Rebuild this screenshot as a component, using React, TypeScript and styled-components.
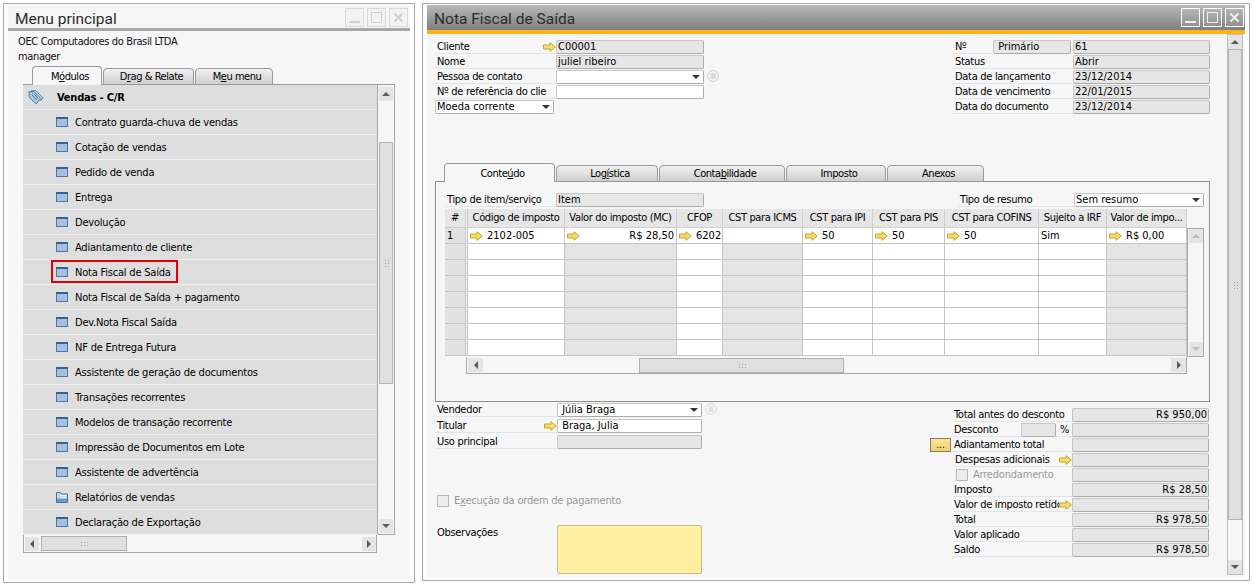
import React from 'react';
import styled, { createGlobalStyle } from 'styled-components';

const GlobalStyle = createGlobalStyle`
  html, body { margin: 0; padding: 0; background: #fff; overflow: hidden; }
  body { font-family: "DejaVu Sans", Tahoma, sans-serif; font-stretch: condensed; font-size: 11px; color: #000; }
  u { text-decoration-thickness: 1px; text-underline-offset: 1px; }
`;

const Arrow = () => (
  <ArrowSvg viewBox="0 0 13 10">
    <path d="M0.5 3h6.5V0.7L12.3 5 7 9.3V7H0.5z" fill="#f6dc68" stroke="#c4a72e" strokeWidth="1" />
  </ArrowSvg>
);

const ArrowSvg = styled.svg`
  width: 13px;
  height: 10px;
  flex: none;
`;

const FormIcon = () => (
  <svg width="12" height="10" viewBox="0 0 12 10" style={{ flex: 'none' }}>
    <rect x="0.5" y="0.5" width="11" height="9" fill="#a6c1de" stroke="#4f77a3" />
    <rect x="0" y="0" width="12" height="2" fill="#2f6496" />
  </svg>
);

const FolderIcon = () => (
  <svg width="12" height="11" viewBox="0 0 12 11" style={{ flex: 'none' }}>
    <path d="M0.5 0.500h4l1 1.500h6v8.500h-11z" fill="#c5d8ea" stroke="#3f75a6" />
    <path d="M4.500 3.500h6M4.500 5.500h6" stroke="#f2f6fa" />
    <rect x="1" y="6.500" width="10" height="3.500" fill="#6c9cc8" />
  </svg>
);

const TagsIcon = () => (
  <svg width="16" height="15" viewBox="0 0 16 15" style={{ flex: 'none' }}>
    <path d="M1 1.500h5l7 7-5 5.500-7-7z" fill="#a9c6df" stroke="#4d81ad" />
    <path d="M3 0.800h5l7 7-2.500 3" fill="none" stroke="#4d81ad" />
    <path d="M4 5l5 5M6 4l4 4" stroke="#4d81ad" />
    <circle cx="3.500" cy="3.500" r="1" fill="#fff" stroke="#4d81ad" strokeWidth="0.6" />
  </svg>
);

const ListRoundIcon = ({ faded }: { faded?: boolean }) => (
  <svg width="12" height="12" viewBox="0 0 12 12" style={{ flex: 'none', marginLeft: 3, opacity: faded ? 0.6 : 1 }}>
    <circle cx="6" cy="6" r="5.400" fill="#f7f7f7" stroke="#c2c8cd" strokeWidth="0.9" />
    <path d="M3.500 4h5M3.500 6h5M3.500 8h5" stroke="#a3abb1" strokeWidth="0.8" />
  </svg>
);

const Page = styled.div`
  display: flex;
  align-items: flex-start;
  gap: 7px;
  width: 1255px;
  height: 584px;
  padding: 3px 5px 0 3px;
  box-sizing: border-box;
`;

const Window = styled.div<{ $w: number; $h: number }>`
  width: ${p => p.$w}px;
  height: ${p => p.$h}px;
  box-sizing: border-box;
  border: 1px solid #a9a9a9;
  padding: 1px 4px 3px;
  background: #fff;
  display: flex;
  flex-direction: column;
`;

const MenuTitleBar = styled.div`
  height: 26px;
  display: flex;
  align-items: center;
  justify-content: space-between;
  padding: 2px 2px 0 7px;
  box-sizing: border-box;
  flex: none;
  background: #f6f6f6;
  border-bottom: 3px solid #a8a8a8;
`;

const TitleText = styled.div`
  font-family: Roboto, sans-serif;
  font-stretch: normal;
  font-size: 15.5px;
  color: #2c2c2c;
  padding-top: 2px;
`;

const WinButtons = styled.div`
  display: flex;
  gap: 3px;
`;

const WinButton = styled.div<{ $faded?: boolean }>`
  width: 19px;
  height: 19px;
  box-sizing: border-box;
  border: 1px solid ${p => (p.$faded ? '#d8d8d8' : '#fff')};
  background: ${p => (p.$faded ? '#f2f2f2' : 'rgba(255,255,255,0.08)')};
  display: flex;
  align-items: center;
  justify-content: center;
  svg { display: block; }
`;

const WinControls = ({ faded }: { faded?: boolean }) => {
  const c = faded ? '#cfcfcf' : '#f0f0f0';
  return (
    <WinButtons>
      <WinButton $faded={faded}>
        <svg width="13" height="13"><rect x="1" y="10" width="11" height="2" fill={c} /></svg>
      </WinButton>
      <WinButton $faded={faded}>
        <svg width="13" height="13"><rect x="1.500" y="1.500" width="10" height="10" fill="none" stroke={c} /></svg>
      </WinButton>
      <WinButton $faded={faded}>
        <svg width="13" height="13"><path d="M2.500 2.500l8 8M10.500 2.500l-8 8" stroke={c} strokeWidth="2" /></svg>
      </WinButton>
    </WinButtons>
  );
};

const MenuBody = styled.div`
  flex: 1;
  background: #f6f6f6;
  padding: 3px 15px 0 15px;
  display: flex;
  flex-direction: column;
  min-height: 0;
`;

const Company = styled.div`
  margin-left: -5px;
  height: 15px;
  line-height: 15px;
  color: #111;
  letter-spacing: -0.35px;
`;

const TabStrip = styled.div<{ $left: number; $top?: number }>`
  display: flex;
  gap: 1px;
  padding-left: ${p => p.$left}px;
  margin-top: ${p => p.$top ?? 0}px;
  position: relative;
  z-index: 1;
  flex: none;
`;

const Tab = styled.div<{ $w: number; $active?: boolean }>`
  width: ${p => p.$w}px;
  height: ${p => (p.$active ? 19 : 17)}px;
  margin-top: ${p => (p.$active ? 0 : 2)}px;
  margin-bottom: -1px;
  padding-left: 6px;
  box-sizing: border-box;
  border: 1px solid #9a9a9a;
  border-bottom: ${p => (p.$active ? '0' : '1px solid #9a9a9a')};
  border-radius: 4px 4px 0 0;
  background: ${p => (p.$active ? '#f6f6f6' : 'linear-gradient(#f0f0f0, #cfcfcf)')};
  text-align: center;
  line-height: ${p => (p.$active ? 20 : 16)}px;
  letter-spacing: -0.45px;
`;

const MenuPanel = styled.div`
  display: grid;
  grid-template-columns: 354px 18px;
  grid-template-rows: 450px 18px;
  border-top: 1px solid #9a9a9a;
  flex: none;
`;

const MenuList = styled.div`
  display: flex;
  flex-direction: column;
  background: #dedede;
  overflow: hidden;
`;

const MenuRow = styled.div<{ $head?: boolean }>`
  flex: none;
  height: 25px;
  box-sizing: border-box;
  border-bottom: 1px solid #f0f0f0;
  display: flex;
  align-items: center;
  padding-left: ${p => (p.$head ? 5 : 33)}px;
  gap: ${p => (p.$head ? 13 : 7)}px;
  font-weight: ${p => (p.$head ? 700 : 400)};
  position: relative;
  letter-spacing: -0.2px;
`;

const MenuLabel = styled.span`
  white-space: nowrap;
`;

const Highlight = styled.div`
  position: absolute;
  left: 28px;
  top: 0;
  width: 127px;
  height: 23px;
  box-sizing: border-box;
  border: 2px solid #e60000;
`;

const VScrollBox = styled.div`
  box-sizing: border-box;
  border-right: 1px solid #a8a8a8;
  border-bottom: 1px solid #a8a8a8;
  border-left: 1px solid #a8a8a8;
  background: #f6f6f6;
  display: flex;
  flex-direction: column;
  align-items: center;
  padding: 2px 1px 1px;
`;

const ScrollButton = styled.div<{ $w?: number }>`
  width: ${p => p.$w ?? 14}px;
  height: 14px;
  background: #e4e4e4;
  display: flex;
  align-items: center;
  justify-content: center;
  flex: none;
`;

const Tri = styled.div<{ $dir: 'up' | 'down' | 'left' | 'right'; $dim?: boolean }>`
  width: 0;
  height: 0;
  border-style: solid;
  ${p => {
    const c = p.$dim ? '#bdbdbd' : '#5c5c5c';
    if (p.$dir === 'up') return `border-width: 0 4px 4px; border-color: transparent transparent ${c};`;
    if (p.$dir === 'down') return `border-width: 4px 4px 0; border-color: ${c} transparent transparent;`;
    if (p.$dir === 'left') return `border-width: 4px 4px 4px 0; border-color: transparent ${c} transparent transparent;`;
    return `border-width: 4px 0 4px 4px; border-color: transparent transparent transparent ${c};`;
  }}
`;

const VThumb = styled.div<{ $top: number; $h: number }>`
  width: 14px;
  height: ${p => p.$h}px;
  margin-top: ${p => p.$top}px;
  box-sizing: border-box;
  border: 1px solid #b4b4b4;
  background: #e0e0e0;
  flex: none;
  display: flex;
  align-items: center;
  justify-content: center;
`;

const Spacer = styled.div`
  flex: 1;
`;

const Grip = styled.div<{ $vertical?: boolean }>`
  width: ${p => (p.$vertical ? 5 : 8)}px;
  height: ${p => (p.$vertical ? 8 : 5)}px;
  background-image: radial-gradient(#a5a5a5 0.7px, transparent 0.8px);
  background-size: 3px 3px;
`;

const HScrollBox = styled.div`
  box-sizing: border-box;
  border-bottom: 1px solid #a8a8a8;
  border-left: 1px solid #a8a8a8;
  border-right: 1px solid #a8a8a8;
  background: #f6f6f6;
  display: flex;
  align-items: center;
  padding: 1px 0 1px 1px;
`;

const HThumb = styled.div<{ $left: number; $w: number }>`
  width: ${p => p.$w}px;
  height: 15px;
  margin-left: ${p => p.$left}px;
  box-sizing: border-box;
  border: 1px solid #b0b0b0;
  background: #e0e0e0;
  flex: none;
  display: flex;
  align-items: center;
  justify-content: center;
`;

const DocTitleBar = styled.div`
  height: 29px;
  flex: none;
  box-sizing: border-box;
  background: linear-gradient(#b9b9b9, #7f7f7f);
  border-bottom: 4px solid #fdb515;
  display: flex;
  align-items: center;
  justify-content: space-between;
  padding: 0 1px 0 7px;
`;

const DocBody = styled.div`
  flex: 1;
  min-height: 0;
  background: #f6f6f6;
  display: flex;
  padding: 0 2px 2px 8px;
  justify-content: space-between;
`;

const DocContent = styled.div`
  width: 775px;
  display: flex;
  flex-direction: column;
`;

const DocHead = styled.div`
  display: flex;
  justify-content: space-between;
  padding-top: 6px;
  height: 129px;
  box-sizing: border-box;
  flex: none;
`;

const FormCol = styled.div<{ $w: number }>`
  width: ${p => p.$w}px;
  display: flex;
  flex-direction: column;
`;

const FormRow = styled.div<{ $pitch?: number }>`
  display: flex;
  align-items: flex-start;
  height: ${p => p.$pitch ?? 15}px;
  flex: none;
`;

const FieldLabel = styled.div<{ $w: number; $noLine?: boolean; $pad?: number }>`
  width: ${p => p.$w}px;
  height: 14px;
  line-height: 13px;
  box-sizing: border-box;
  padding-left: ${p => p.$pad ?? 2}px;
  border-bottom: ${p => (p.$noLine ? '0' : '1px solid #dfe5e8')};
  flex: none;
  display: flex;
  align-items: center;
  justify-content: space-between;
  white-space: nowrap;
  overflow: hidden;
  letter-spacing: -0.3px;
`;

const LabelClip = styled.span`
  flex: 1;
  min-width: 0;
  overflow: hidden;
`;

const Field = styled.div<{ $w: number; $tone?: 'off' | 'on'; $right?: boolean }>`
  width: ${p => p.$w}px;
  height: 14px;
  box-sizing: border-box;
  flex: none;
  background: ${p => (p.$tone === 'on' ? '#fff' : '#e6e6e6')};
  border: 1px solid #c6c6c6;
  border-right-color: #acacac;
  border-bottom-color: #acacac;
  border-radius: 2px;
  line-height: 12px;
  padding: 0 1px;
  display: flex;
  align-items: center;
  justify-content: ${p => (p.$right ? 'flex-end' : 'space-between')};
  white-space: nowrap;
  overflow: hidden;
`;

const FieldGap = styled.div`
  width: 2px;
  flex: none;
`;

const Caret = styled.div`
  width: 0;
  height: 0;
  border-style: solid;
  border-width: 4px 4px 0;
  border-color: #333 transparent transparent;
  margin-right: 2px;
  flex: none;
`;

const DocTabPanel = styled.div`
  height: 221px;
  box-sizing: border-box;
  border: 1px solid #8f8f8f;
  padding: 11px 5px 0 9px;
  flex: none;
  display: flex;
  flex-direction: column;
`;

const PanelRow = styled.div`
  display: flex;
  justify-content: space-between;
  height: 16px;
  flex: none;
`;

const GridWrap = styled.div`
  display: grid;
  grid-template-columns: 742px 17px;
  grid-template-rows: 148px 17px;
  flex: none;
`;

const TaxTable = styled.div`
  display: grid;
  grid-template-columns: 21px 2px 97px 112px 46px 80px 70px 72px 94px 68px 80px;
  grid-template-rows: 19px repeat(8, 16px);
  width: 742px;
`;

const HeadCell = styled.div`
  background: #e6e6e6;
  border-right: 1px solid #cfcfcf;
  border-bottom: 1px solid #cfcfcf;
  box-sizing: border-box;
  padding: 0 1px;
  height: 19px;
  line-height: 17px;
  text-align: center;
  white-space: nowrap;
  overflow: hidden;
  letter-spacing: -0.35px;
`;

const BodyCell = styled.div<{ $off?: boolean; $side?: boolean }>`
  background: ${p => (p.$side ? '#e2e2e2' : p.$off ? '#e4e4e4' : '#fff')};
  border-right: 1px solid #c6c6c6;
  border-bottom: 1px solid #c6c6c6;
  box-sizing: border-box;
  display: flex;
  align-items: center;
  gap: 4px;
  padding: 0 2px;
  white-space: nowrap;
  overflow: hidden;
  justify-content: flex-start;
`;

const Grow = styled.span`
  flex: 1;
  text-align: right;
`;

const GapCell = styled.div`
  background: #f0f0f0;
  border-right: 1px solid #c6c6c6;
  border-bottom: 1px solid #e0e0e0;
`;

const GridVScroll = styled(VScrollBox)`
  margin-top: 19px;
  border-top: 1px solid #a8a8a8;
  padding-top: 0;
  padding-bottom: 0;
`;

const GridHScroll = styled(HScrollBox)`
  margin-left: 21px;
`;

const DocBottom = styled.div`
  display: flex;
  justify-content: space-between;
  flex: 1;
`;

const BottomLeft = styled.div`
  width: 290px;
  padding-top: 1px;
  display: flex;
  flex-direction: column;
`;

const BottomRight = styled.div`
  padding-top: 6px;
  display: flex;
  flex-direction: column;
  margin-right: 1px;
`;

const CheckLine = styled.div<{ $top?: number; $left: number; $w?: number }>`
  display: flex;
  align-items: center;
  gap: 5px;
  margin-top: ${p => p.$top ?? 0}px;
  margin-left: ${p => p.$left}px;
  width: ${p => (p.$w ? `${p.$w}px` : 'auto')};
  height: 13px;
  color: #999;
  flex: none;
  white-space: nowrap;
  letter-spacing: -0.2px;
`;

const CheckBox = styled.div`
  width: 12px;
  height: 12px;
  box-sizing: border-box;
  border: 1px solid #b8b8b8;
  background: #ececec;
  flex: none;
`;

const NotesRow = styled.div`
  display: flex;
  margin-top: 18px;
  flex: none;
`;

const NotesBox = styled.div`
  width: 145px;
  height: 49px;
  box-sizing: border-box;
  background: #ffef9f;
  border: 1px solid #c4bd93;
  border-radius: 2px;
`;

const TotalsRow = styled.div`
  display: flex;
  align-items: flex-start;
  height: 15px;
  flex: none;
`;

const SlotButton = styled.div`
  width: 21px;
  height: 14px;
  box-sizing: border-box;
  margin-right: 2px;
  background: linear-gradient(#fbe59a, #f3cf6a);
  border: 1px solid #8c7d4c;
  line-height: 12px;
  text-align: center;
  font-size: 10px;
  flex: none;
`;

const Slot = styled.div`
  width: 23px;
  flex: none;
`;

const PageScroll = styled(VScrollBox)`
  width: 16px;
  border: 1px solid #bcbcbc;
  padding: 0;
  background: #f6f6f6;
  align-items: stretch;
  flex: none;
`;

const PageScrollThumb = styled(VThumb)`
  width: auto;
`;

const PageScrollButton = styled(ScrollButton)`
  width: auto;
`;

const menuItems = [
  'Contrato guarda-chuva de vendas', 'Cotação de vendas', 'Pedido de venda', 'Entrega', 'Devolução',
  'Adiantamento de cliente', 'Nota Fiscal de Saída', 'Nota Fiscal de Saída + pagamento', 'Dev.Nota Fiscal Saída',
  'NF de Entrega Futura', 'Assistente de geração de documentos', 'Transações recorrentes',
  'Modelos de transação recorrente', 'Impressão de Documentos em Lote', 'Assistente de advertência',
  'Relatórios de vendas', 'Declaração de Exportação',
];

const headers = ['#', '', 'Código de imposto', 'Valor do imposto (MC)', 'CFOP', 'CST para ICMS', 'CST para IPI', 'CST para PIS', 'CST para COFINS', 'Sujeito a IRF', 'Valor de impo...'];
const offCols = [3, 5, 10];

const firstRow: { t: string; arrow?: boolean; right?: boolean }[] = [
  { t: '2102-005', arrow: true },
  { t: 'R$ 28,50', arrow: true, right: true },
  { t: '6202', arrow: true },
  { t: '' },
  { t: '50', arrow: true },
  { t: '50', arrow: true },
  { t: '50', arrow: true },
  { t: 'Sim' },
  { t: 'R$ 0,00', arrow: true },
];

const totals: { label: string; value?: string }[] = [
  { label: 'Imposto', value: 'R$ 28,50' },
  { label: 'Valor de imposto retidc' },
  { label: 'Total', value: 'R$ 978,50' },
  { label: 'Valor aplicado' },
  { label: 'Saldo', value: 'R$ 978,50' },
];

const App = () => {
  return (
    <Page>
      <GlobalStyle />
      <Window $w={412} $h={580}>
        <MenuTitleBar>
          <TitleText>Menu principal</TitleText>
          <WinControls faded />
        </MenuTitleBar>
        <MenuBody>
          <Company>OEC Computadores do Brasil LTDA</Company>
          <Company>manager</Company>
          <TabStrip $left={9} $top={2}>
            <Tab $w={70} $active>M<u>ó</u>dulos</Tab>
            <Tab $w={91}>D<u>r</u>ag &amp; Relate</Tab>
            <Tab $w={78}>M<u>e</u>u menu</Tab>
          </TabStrip>
          <MenuPanel>
            <MenuList>
              <MenuRow $head>
                <TagsIcon />
                <MenuLabel>Vendas - C/R</MenuLabel>
              </MenuRow>
              {menuItems.map(item => (
                <MenuRow key={item}>
                  {item === 'Relatórios de vendas' ? <FolderIcon /> : <FormIcon />}
                  <MenuLabel>{item}</MenuLabel>
                  {item === 'Nota Fiscal de Saída' && <Highlight />}
                </MenuRow>
              ))}
            </MenuList>
            <VScrollBox>
              <ScrollButton><Tri $dir="up" /></ScrollButton>
              <VThumb $top={41} $h={242}><Grip $vertical /></VThumb>
              <Spacer />
              <ScrollButton><Tri $dir="down" /></ScrollButton>
            </VScrollBox>
            <HScrollBox>
              <ScrollButton $w={14}><Tri $dir="left" /></ScrollButton>
              <HThumb $left={2} $w={86}><Grip /></HThumb>
              <Spacer />
              <ScrollButton $w={14}><Tri $dir="right" /></ScrollButton>
            </HScrollBox>
          </MenuPanel>
        </MenuBody>
      </Window>

      <Window $w={828} $h={578}>
        <DocTitleBar>
          <TitleText>Nota Fiscal de Saída</TitleText>
          <WinControls />
        </DocTitleBar>
        <DocBody>
          <DocContent>
            <DocHead>
              <FormCol $w={270}>
                <FormRow>
                  <FieldLabel $w={121}>Cliente<Arrow /></FieldLabel>
                  <Field $w={148}>C00001</Field>
                </FormRow>
                <FormRow>
                  <FieldLabel $w={121}>Nome</FieldLabel>
                  <Field $w={148}>juliel ribeiro</Field>
                </FormRow>
                <FormRow>
                  <FieldLabel $w={121}>Pessoa de contato</FieldLabel>
                  <Field $w={148} $tone="on"><span /><Caret /></Field>
                  <ListRoundIcon />
                </FormRow>
                <FormRow>
                  <FieldLabel $w={121}>Nº de referência do clie</FieldLabel>
                  <Field $w={148} $tone="on" />
                </FormRow>
                <FormRow>
                  <Field $w={119} $tone="on">Moeda corrente<Caret /></Field>
                </FormRow>
              </FormCol>
              <FormCol $w={257}>
                <FormRow>
                  <FieldLabel $w={40}>Nº</FieldLabel>
                  <Field $w={78}>&nbsp;Primário</Field>
                  <FieldGap />
                  <Field $w={137}>61</Field>
                </FormRow>
                <FormRow>
                  <FieldLabel $w={120}>Status</FieldLabel>
                  <Field $w={137}>Abrir</Field>
                </FormRow>
                <FormRow>
                  <FieldLabel $w={120}>Data de lançamento</FieldLabel>
                  <Field $w={137}>23/12/2014</Field>
                </FormRow>
                <FormRow>
                  <FieldLabel $w={120}>Data de vencimento</FieldLabel>
                  <Field $w={137}>22/01/2015</Field>
                </FormRow>
                <FormRow>
                  <FieldLabel $w={120}>Data do documento</FieldLabel>
                  <Field $w={137}>23/12/2014</Field>
                </FormRow>
              </FormCol>
            </DocHead>

            <TabStrip $left={9}>
              <Tab $w={111} $active>Conte<u>ú</u>do</Tab>
              <Tab $w={102}>Log<u>í</u>stica</Tab>
              <Tab $w={126}>Conta<u>b</u>ilidade</Tab>
              <Tab $w={100}>Imposto</Tab>
              <Tab $w={97}>Anexos</Tab>
            </TabStrip>
            <DocTabPanel>
              <PanelRow>
                <FormRow>
                  <FieldLabel $w={111}>Tipo de item/serviço</FieldLabel>
                  <Field $w={148}>Item</Field>
                </FormRow>
                <FormRow>
                  <FieldLabel $w={116}>Tipo de resumo</FieldLabel>
                  <Field $w={130} $tone="on">Sem resumo<Caret /></Field>
                </FormRow>
              </PanelRow>
              <GridWrap>
                <TaxTable>
                  {headers.map((h, i) => (i === 1 ? <GapCell key={i} /> : <HeadCell key={i}>{h}</HeadCell>))}
                  <BodyCell $side>1</BodyCell>
                  <GapCell />
                  {firstRow.map((c, i) => (
                    <BodyCell key={i}>
                      {c.arrow && <Arrow />}
                      {c.right ? <Grow>{c.t}</Grow> : c.t}
                    </BodyCell>
                  ))}
                  {Array.from({ length: 7 }).map((_, r) =>
                    headers.map((_h, i) =>
                      i === 0 ? (
                        <BodyCell key={`${r}-${i}`} $side />
                      ) : i === 1 ? (
                        <GapCell key={`${r}-${i}`} />
                      ) : (
                        <BodyCell key={`${r}-${i}`} $off={offCols.includes(i)} />
                      )
                    )
                  )}
                </TaxTable>
                <GridVScroll>
                  <ScrollButton><Tri $dir="up" $dim /></ScrollButton>
                  <Spacer />
                  <ScrollButton><Tri $dir="down" $dim /></ScrollButton>
                </GridVScroll>
                <GridHScroll>
                  <ScrollButton $w={15}><Tri $dir="left" /></ScrollButton>
                  <HThumb $left={156} $w={205}><Grip /></HThumb>
                  <Spacer />
                  <ScrollButton $w={15}><Tri $dir="right" /></ScrollButton>
                </GridHScroll>
              </GridWrap>
            </DocTabPanel>

            <DocBottom>
              <BottomLeft>
                <FormRow $pitch={16}>
                  <FieldLabel $w={122}>Vendedor</FieldLabel>
                  <Field $w={145} $tone="on">&nbsp;Júlia Braga<Caret /></Field>
                  <ListRoundIcon faded />
                </FormRow>
                <FormRow $pitch={16}>
                  <FieldLabel $w={122}>Titular<Arrow /></FieldLabel>
                  <Field $w={145} $tone="on">&nbsp;Braga, Julia</Field>
                </FormRow>
                <FormRow $pitch={16}>
                  <FieldLabel $w={122}>Uso principal</FieldLabel>
                  <Field $w={145} />
                </FormRow>
                <CheckLine $top={43} $left={2}>
                  <CheckBox />
                  <span>E<u>x</u>ecução da ordem de pagamento</span>
                </CheckLine>
                <NotesRow>
                  <FieldLabel $w={122} $noLine>Observações</FieldLabel>
                  <NotesBox />
                </NotesRow>
              </BottomLeft>
              <BottomRight>
                <TotalsRow>
                  <Slot />
                  <FieldLabel $w={119} $pad={1}>Total antes do desconto</FieldLabel>
                  <Field $w={137} $right>R$ 950,00</Field>
                </TotalsRow>
                <TotalsRow>
                  <Slot />
                  <FieldLabel $w={68} $pad={1}>Desconto</FieldLabel>
                  <Field $w={35} />
                  <FieldLabel $w={16} $pad={4}>%</FieldLabel>
                  <Field $w={137} />
                </TotalsRow>
                <TotalsRow>
                  <SlotButton>...</SlotButton>
                  <FieldLabel $w={119} $pad={1}>Adiantamento total</FieldLabel>
                  <Field $w={137} />
                </TotalsRow>
                <TotalsRow>
                  <Slot />
                  <FieldLabel $w={119} $pad={2}>Despesas adicionais<Arrow /></FieldLabel>
                  <Field $w={137} />
                </TotalsRow>
                <TotalsRow>
                  <Slot />
                  <CheckLine $left={3} $w={116}>
                    <CheckBox />
                    <span>Arredondamento</span>
                  </CheckLine>
                  <Field $w={137} />
                </TotalsRow>
                {totals.map(t => (
                  <TotalsRow key={t.label}>
                    <Slot />
                    <FieldLabel $w={119} $pad={1}>
                      <LabelClip>{t.label}</LabelClip>
                      {t.label.startsWith('Valor de') && <Arrow />}
                    </FieldLabel>
                    <Field $w={137} $right>{t.value}</Field>
                  </TotalsRow>
                ))}
              </BottomRight>
            </DocBottom>
          </DocContent>
          <PageScroll>
            <PageScrollButton><Tri $dir="up" /></PageScrollButton>
            <PageScrollThumb $top={0} $h={471}><Grip $vertical /></PageScrollThumb>
            <Spacer />
            <PageScrollButton><Tri $dir="down" /></PageScrollButton>
          </PageScroll>
        </DocBody>
      </Window>
    </Page>
  );
};

export default App;
